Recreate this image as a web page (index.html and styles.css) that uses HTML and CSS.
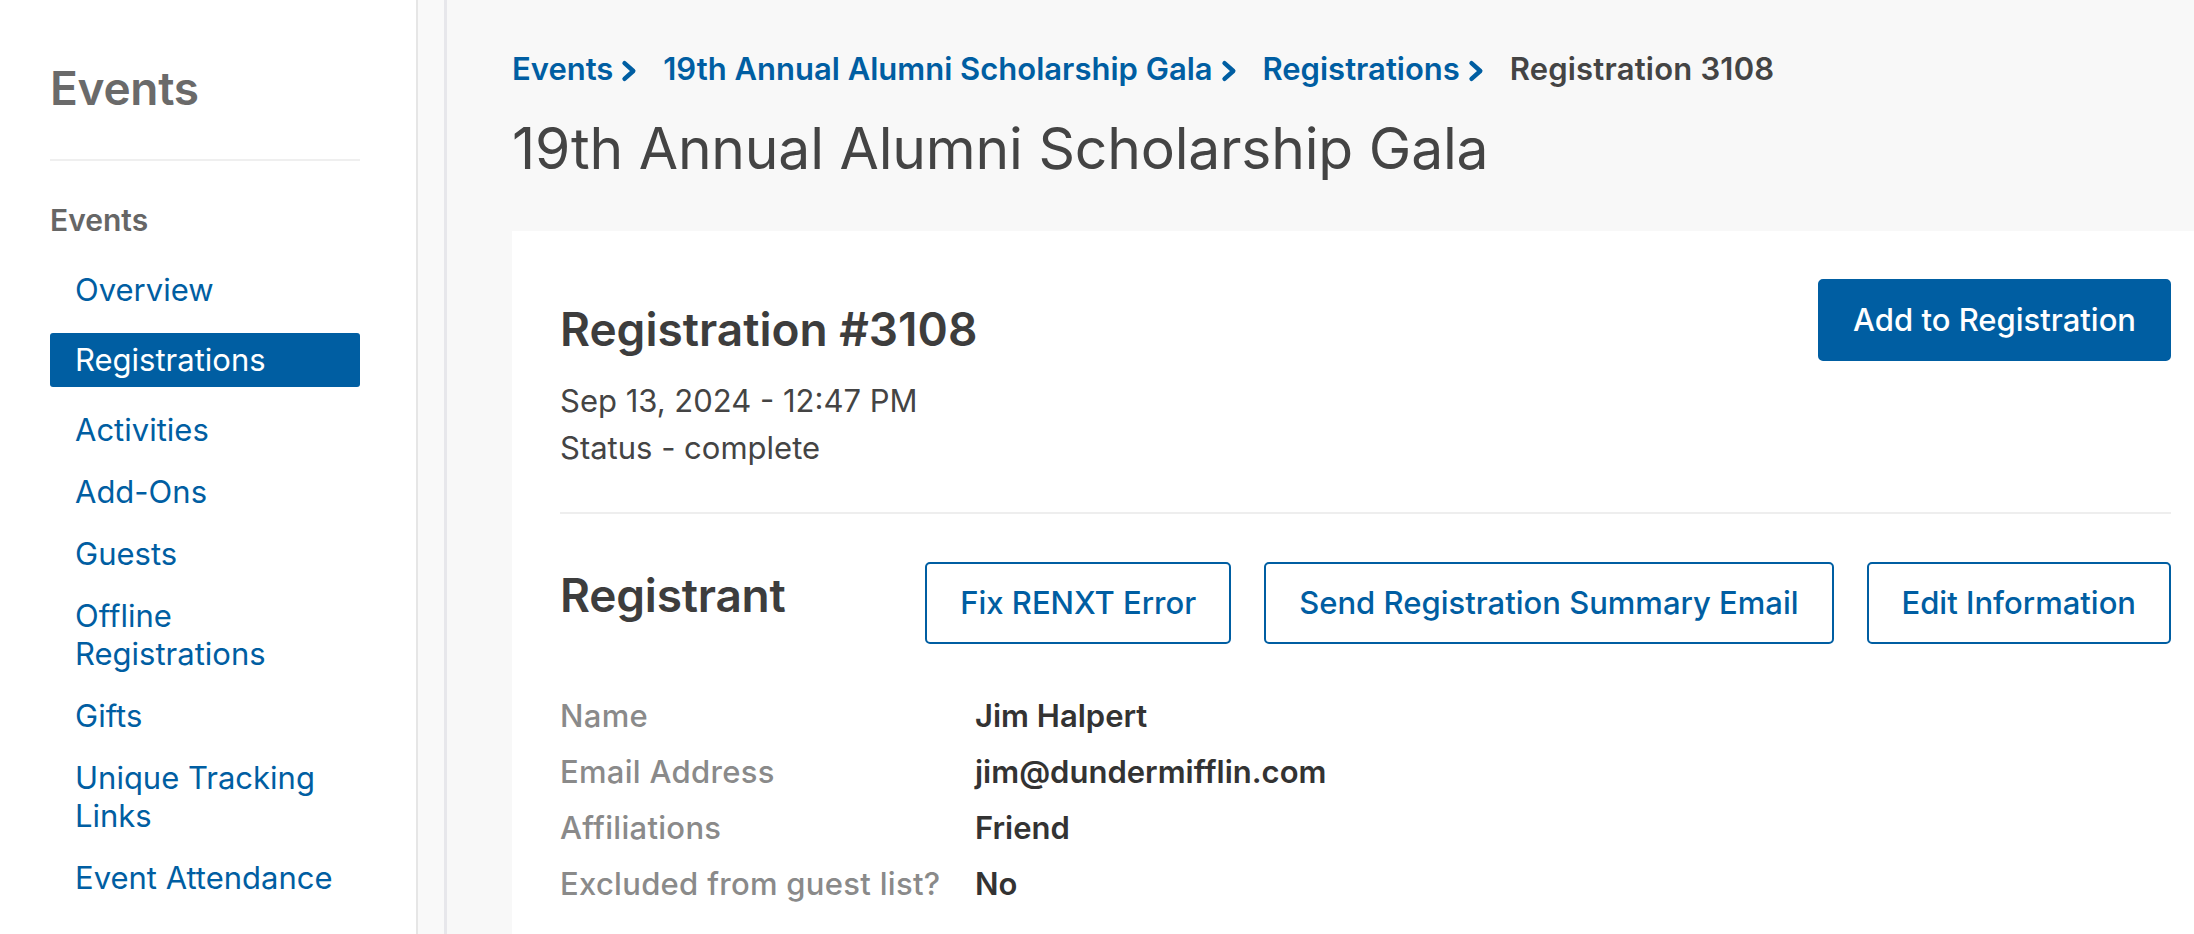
FILE: index.html
```html
<!DOCTYPE html>
<html lang="en">
<head>
<meta charset="utf-8">
<title>Registration 3108</title>
<link rel="stylesheet" href="styles.css">
</head>
<body>
<aside class="sidebar">
  <h1 class="side-title">Events</h1>
  <hr class="side-rule">
  <div class="side-sub">Events</div>
  <nav class="side-nav">
    <a class="nav-item" href="#">Overview</a>
    <a class="nav-item active" href="#">Registrations</a>
    <a class="nav-item" href="#">Activities</a>
    <a class="nav-item" href="#">Add-Ons</a>
    <a class="nav-item" href="#">Guests</a>
    <a class="nav-item" href="#">Offline<br>Registrations</a>
    <a class="nav-item" href="#">Gifts</a>
    <a class="nav-item" href="#">Unique Tracking<br>Links</a>
    <a class="nav-item" href="#">Event Attendance</a>
  </nav>
</aside>
<div class="rail"></div>
<main class="main">
  <div class="crumbs">
    <a class="crumb" href="#">Events</a><svg class="chev" viewBox="0 0 16 22" aria-hidden="true"><path d="M3.5 3.2 L12.3 11 L3.5 18.8"/></svg>
    <a class="crumb" href="#">19th Annual Alumni Scholarship Gala</a><svg class="chev" viewBox="0 0 16 22" aria-hidden="true"><path d="M3.5 3.2 L12.3 11 L3.5 18.8"/></svg>
    <a class="crumb" href="#">Registrations</a><svg class="chev" viewBox="0 0 16 22" aria-hidden="true"><path d="M3.5 3.2 L12.3 11 L3.5 18.8"/></svg>
    <span class="crumb-current">Registration 3108</span>
  </div>
  <h1 class="page-title">19th Annual Alumni Scholarship Gala</h1>

  <section class="card">
    <div class="card-head">
      <div class="reg-info">
        <h2 class="reg-title">Registration #3108</h2>
        <div class="reg-meta">Sep 13, 2024 - 12:47 PM</div>
        <div class="reg-meta">Status - complete</div>
      </div>
      <button class="btn btn-primary">Add to Registration</button>
    </div>
    <hr class="card-rule">
    <div class="section-head">
      <h2 class="section-title">Registrant</h2>
      <div class="actions">
        <button class="btn btn-outline">Fix RENXT Error</button>
        <button class="btn btn-outline">Send Registration Summary Email</button>
        <button class="btn btn-outline">Edit Information</button>
      </div>
    </div>
    <dl class="details">
      <dt>Name</dt><dd>Jim Halpert</dd>
      <dt>Email Address</dt><dd>jim@dundermifflin.com</dd>
      <dt>Affiliations</dt><dd>Friend</dd>
      <dt>Excluded from guest list?</dt><dd>No</dd>
    </dl>
  </section>
</main>
</body>
</html>
```

FILE: styles.css
```css
* { box-sizing: border-box; }
html, body { height: 100%; }
body {
  margin: 0;
  display: flex;
  overflow: hidden;
  font-family: Inter, "Noto Sans", "Liberation Sans", sans-serif;
  color: #444;
  background: #f8f8f8;
}

/* Sidebar */
.sidebar {
  width: 418px;
  flex: 0 0 418px;
  background: #fff;
  border-right: 2px solid #e6e6e6;
  padding: 60px 56px 0 50px;
}
.side-title {
  margin: 0;
  font-size: 46px;
  line-height: 56px;
  font-weight: 600;
  color: #6a6a6a;
  letter-spacing: -0.3px;
}
.side-rule {
  margin: 43px 0 0;
  border: 0;
  height: 2px;
  background: #efefef;
}
.side-sub {
  margin-top: 40px;
  font-size: 30px;
  line-height: 38px;
  font-weight: 600;
  color: #666;
}
.side-nav {
  margin-top: 24px;
  display: flex;
  flex-direction: column;
  gap: 8px;
}
.nav-item {
  display: block;
  padding: 8px 25px;
  font-size: 31px;
  line-height: 38px;
  color: #005ea2;
  text-decoration: none;
  border-radius: 3px;
}
.nav-item.active {
  background: #005ea2;
  color: #fff;
  margin: 8px 0;
}

.rail {
  flex: 0 0 29px;
  background: #f9f9f9;
  border-right: 3px solid #e7e7eb;
}

/* Main */
.main {
  flex: 1;
  min-width: 0;
  padding: 50px 0 0 65px;
}
.crumbs {
  font-size: 31px;
  line-height: 38px;
  font-weight: 600;
  white-space: nowrap;
}
.crumb {
  color: #005ea2;
  text-decoration: none;
}
.chev {
  width: 16px;
  height: 22px;
  margin: 0 18px 0 8px;
  vertical-align: -2px;
  fill: none;
  stroke: #005ea2;
  stroke-width: 4.4;
  stroke-linecap: round;
  stroke-linejoin: round;
}
.crumb-current { color: #444; font-weight: 600; letter-spacing: 0.2px; }
.page-title {
  margin: 26px 0 0;
  font-size: 57px;
  line-height: 70px;
  font-weight: 400;
  color: #444;
  letter-spacing: -0.2px;
}

.card {
  margin-top: 47px;
  background: #fff;
  padding: 48px 23px 48px 48px;
  min-height: 700px;
}
.card-head {
  display: flex;
  justify-content: space-between;
  align-items: flex-start;
}
.reg-title, .section-title {
  margin: 0;
  font-size: 46px;
  line-height: 54px;
  font-weight: 600;
  color: #3d3d3d;
}
.reg-title { margin-top: 23px; margin-bottom: 21px; }
.section-title { letter-spacing: -0.2px; }
.reg-meta {
  font-size: 31px;
  line-height: 47px;
  color: #444;
}
.card-rule {
  margin: 41px 0 0;
  border: 0;
  height: 2px;
  background: #eeeeee;
}
.section-head {
  margin-top: 48px;
  display: flex;
  justify-content: space-between;
  align-items: flex-start;
}
.section-title { margin-top: 6px; }
.actions {
  display: flex;
  gap: 33px;
}
.btn {
  font-family: inherit;
  font-size: 31px;
  line-height: 38px;
  font-weight: 500;
  padding: 20px 33px;
  border: 2px solid #005ea2;
  border-radius: 5px;
  cursor: pointer;
  white-space: nowrap;
}
.btn-primary {
  background: #005ea2;
  color: #fff;
}
.btn-outline {
  background: #fff;
  color: #005ea2;
}

.details {
  margin: 53px 0 0;
  display: grid;
  grid-template-columns: 415px 1fr;
  row-gap: 18px;
  font-size: 31px;
  line-height: 38px;
  font-weight: 500;
}
.details dt { color: #8a8a8a; letter-spacing: 0.3px; }
.details dd { margin: 0; color: #333; font-weight: 600; }
```
